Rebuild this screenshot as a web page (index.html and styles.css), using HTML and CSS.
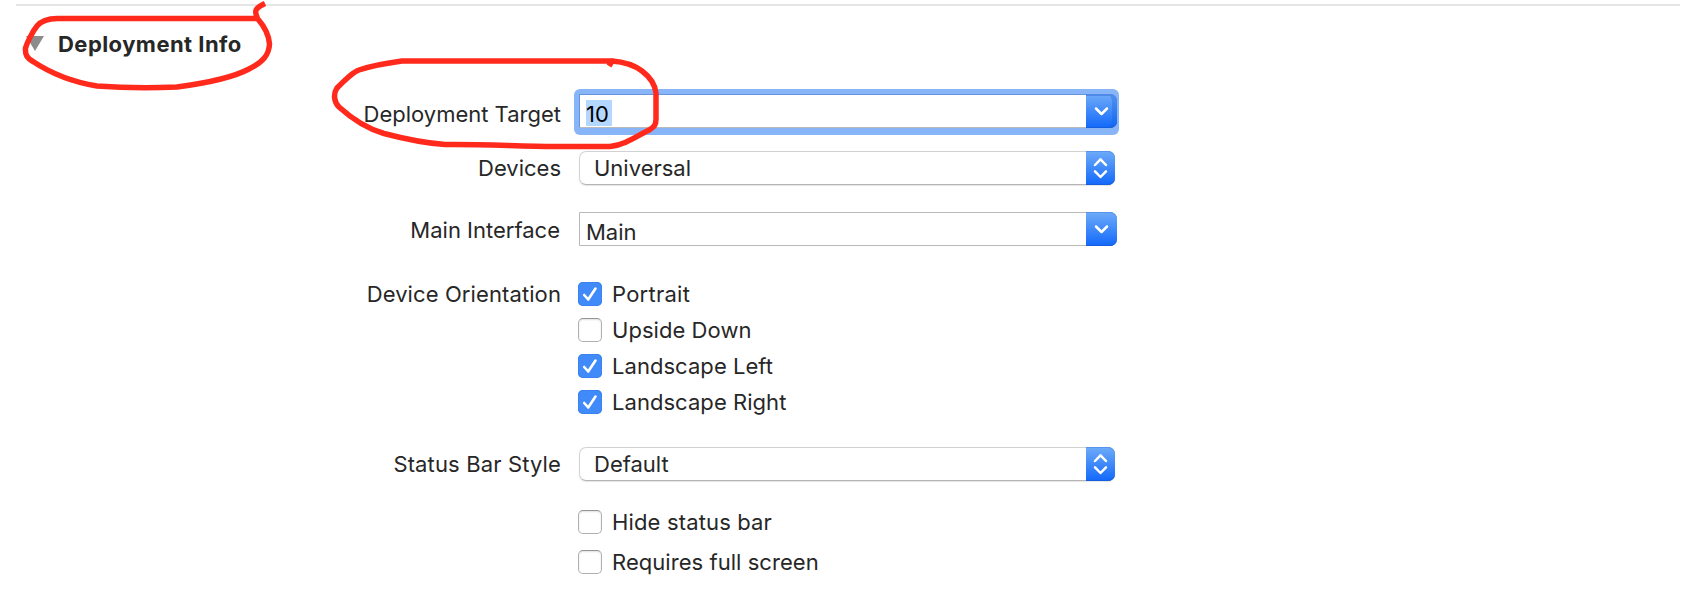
FILE: index.html
```html
<!DOCTYPE html>
<html lang="en">
<head>
<meta charset="utf-8">
<title>Deployment Info</title>
<link rel="stylesheet" href="styles.css">
</head>
<body>
<main class="panel">
  <header class="header">
    <svg class="disclosure" width="18" height="15" viewBox="0 0 18 15"><path d="M0 0H18L9 15Z" fill="#8c8c8c"/></svg>
    <h1 class="title">Deployment Info</h1>
  </header>

  <div class="row row-target">
    <span class="label">Deployment Target</span>
    <div class="combo focused">
      <span class="combo-text"><span class="selection">10</span></span>
      <span class="button"><svg width="31" height="34" viewBox="0 0 31 34"><path class="chevron" d="M10 14.5L15.5 20L21 14.5"/></svg></span>
    </div>
  </div>

  <div class="row row-devices">
    <span class="label">Devices</span>
    <div class="popup">
      <span class="popup-text">Universal</span>
      <span class="button"><svg width="29" height="34" viewBox="0 0 29 34"><path class="chevron" d="M9 14L14.500 8.300L20 14M9 20.300L14.500 26L20 20.300"/></svg></span>
    </div>
  </div>

  <div class="row row-interface">
    <span class="label">Main Interface</span>
    <div class="combo">
      <span class="combo-text">Main</span>
      <span class="button"><svg width="31" height="34" viewBox="0 0 31 34"><path class="chevron" d="M10 14.5L15.5 20L21 14.5"/></svg></span>
    </div>
  </div>

  <div class="row row-orientation">
    <span class="label">Device Orientation</span>
    <div class="checks">
      <div class="check"><span class="box on"><svg width="24" height="24" viewBox="0 0 24 24"><path class="tick" d="M6.200 13L10.200 17.500L17.500 6.500"/></svg></span><span class="portrait">Portrait</span></div>
      <div class="check"><span class="box"></span><span>Upside Down</span></div>
      <div class="check"><span class="box on"><svg width="24" height="24" viewBox="0 0 24 24"><path class="tick" d="M6.200 13L10.200 17.500L17.500 6.500"/></svg></span><span>Landscape Left</span></div>
      <div class="check"><span class="box on"><svg width="24" height="24" viewBox="0 0 24 24"><path class="tick" d="M6.200 13L10.200 17.500L17.500 6.500"/></svg></span><span>Landscape Right</span></div>
    </div>
  </div>

  <div class="row row-status">
    <span class="label">Status Bar Style</span>
    <div class="popup">
      <span class="popup-text">Default</span>
      <span class="button"><svg width="29" height="34" viewBox="0 0 29 34"><path class="chevron" d="M9 14L14.500 8.300L20 14M9 20.300L14.500 26L20 20.300"/></svg></span>
    </div>
  </div>

  <div class="row row-options">
    <span class="label"></span>
    <div class="checks options">
      <div class="check"><span class="box"></span><span class="hide">Hide status bar</span></div>
      <div class="check"><span class="box"></span><span>Requires full screen</span></div>
    </div>
  </div>

  <svg class="annotations" width="1708" height="600" viewBox="0 0 1708 600">
    <path d="M258 18.500H60C49 18 41 21 37 26C32 32 27 43 25.500 48C25 55 27 58 33 61.500C52 74 72 82 97 86C125 88 151 88 177 87C207 83 234 77 249 69C263 62 269 55 269.500 44C269 34 264 26 257.500 18.500C254 11 255 8 265 3.500"/>
    <path d="M609 66L612 61H402C387 63 371 66 359 70C353 72 347 78 337 88C333 94 334 102 339 107C350 117 365 128 384 133.500C405 139 422 143 445 144.500C485 144 520 146.500 555 146.500H610C625 145 637 136 650 129.500C654 127 656 125 656 119V93C655 85 650 77 642 71C634 65 626 62 612 61"/>
  </svg>
</main>
</body>
</html>
```

FILE: styles.css
```css
* { box-sizing: border-box; }

body {
  margin: 0;
  background: #fff;
  color: #272727;
  font: 22px/24px Inter, "Liberation Sans", sans-serif;
  white-space: nowrap;
}

.panel {
  position: relative;
  width: 1708px;
  height: 600px;
  padding-top: 4px;
  overflow: hidden;
}

.header {
  display: flex;
  width: 1664px;
  height: 90px;
  margin-left: 16px;
  padding: 28px 0 0 10px;
  border-top: 2px solid #e5e5e5;
}

.disclosure { margin-top: 2px; }

.title {
  margin: -2px 0 0 14px;
  font-size: 22px;
  font-weight: 700;
  line-height: 24px;
  letter-spacing: 0.45px;
}

.row {
  display: grid;
  grid-template-columns: 562px 538px;
  column-gap: 17px;
}

.label {
  padding-right: 1px;
  text-align: right;
}

.row-target {
  height: 57px;
  isolation: isolate;
}
.row-target .label { padding-top: 8px; }
.row-devices { height: 61px; }
.row-devices .label, .row-status .label { padding-top: 5px; }
.row-interface { height: 70px; }
.row-interface .label { padding: 6px 2px 0 0; }
.row-orientation { height: 165px; }
.row-orientation .label { letter-spacing: 0.1px; }
.row-status { height: 63px; }
.row-status .label { letter-spacing: 0.14px; }

.combo {
  display: flex;
  justify-content: space-between;
  width: 538px;
  height: 34px;
  border: 1px solid #b9b9b9;
  border-radius: 0 7px 7px 0;
  background: #fff;
}

.combo-text { padding: 7px 0 0 6px; }

.focused {
  position: relative;
  border-color: #6794df #6794df #b9b9b9;
  color: #000;
}

/* Focus ring around the active field */
.focused::before {
  content: "";
  position: absolute;
  inset: -6px -3px -8px -6px;
  z-index: -1;
  border-radius: 6px;
  background: #88b4f8;
}

.selection {
  display: block;
  width: 26px;
  height: 26px;
  margin-top: -2px;
  padding-top: 2px;
  background: #b3d7ff;
}

.popup {
  display: flex;
  justify-content: space-between;
  width: 536px;
  height: 34px;
  border: 1px solid #d2d2d2;
  border-bottom-color: #b4b4b4;
  border-radius: 7px;
  box-shadow: 0 1px 1px #0000001a;
}

.popup-text { padding: 4px 0 0 14px; }

.button {
  height: 34px;
  margin: -1px -1px 0 0;
  border-radius: 0 7px 7px 0;
  background: linear-gradient(#6eabf8, #1268fb);
  box-shadow: inset 0 1px #5595eb, inset 0 -1px #145edd;
}

.focused .button {
  box-shadow: inset 0 2px #4f8ae6, inset -5px 0 #1a62d855, inset 0 -1px #145edd;
}

.button svg, .box svg { display: block; }

.chevron {
  fill: none;
  stroke: #fff;
  stroke-width: 2.5;
  stroke-linecap: round;
  stroke-linejoin: round;
}

.checks {
  display: grid;
  align-content: start;
  gap: 12px;
  margin-left: -1px;
}

.options { gap: 16px; }

.check {
  display: flex;
  height: 24px;
  gap: 10px;
  letter-spacing: 0.05px;
}

.portrait { letter-spacing: 0.25px; }
.hide { letter-spacing: 0.15px; }

.box {
  width: 24px;
  height: 24px;
  border: 1px solid #b0b0b0;
  border-top-color: #949494;
  border-radius: 5px;
  box-shadow: inset 0 1px 2px #0000001f;
}

.on {
  border: 0;
  background: #408afa;
  box-shadow: inset 0 0 0 1px #3b82ef;
}

.tick {
  fill: none;
  stroke: #fff;
  stroke-width: 2.6;
  stroke-linecap: round;
  stroke-linejoin: round;
}

/* Hand-drawn marks lie over the form */
.annotations {
  position: absolute;
  top: 0;
  left: 0;
  pointer-events: none;
}

.annotations path {
  fill: none;
  stroke: #ff2a1c;
  stroke-width: 5.5;
  stroke-linejoin: round;
}
```
